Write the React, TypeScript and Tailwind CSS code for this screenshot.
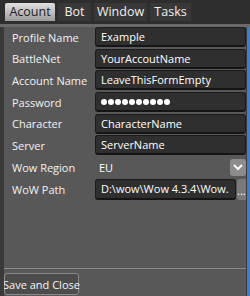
import React from 'react';

const tabs = [
  { name: 'Acount', w: 'w-[50px]' },
  { name: 'Bot', w: 'w-[33px]' },
  { name: 'Window', w: 'w-[53px]' },
  { name: 'Tasks', w: 'w-[41px]' },
];

const rows: { label: string; value: string }[] = [
  { label: 'Profile Name', value: 'Example' },
  { label: 'BattleNet', value: 'YourAccoutName' },
  { label: 'Account Name', value: 'LeaveThisFormEmpty' },
  { label: 'Password', value: '' },
  { label: 'Character', value: 'CharacterName' },
  { label: 'Server', value: 'ServerName' },
];

const Field = ({ children }: { children: React.ReactNode }) => (
  <div className="h-[20px] min-w-0 flex items-center pl-[5px] bg-[#2f2f2f] border border-[#1b1b1b] border-b-2 border-b-[#151515] rounded-[3px] text-white whitespace-nowrap overflow-hidden">
    {children}
  </div>
);

const PasswordDots = () => (
  <div className="flex gap-[1px] items-center">
    {Array.from({ length: 10 }).map((_, i) => (
      <span key={i} className="w-[6px] h-[6px] rounded-full bg-white" />
    ))}
  </div>
);

export default function App() {
  return (
    <div className="w-[250px] h-[296px] bg-[#2e2e2e] flex flex-col overflow-hidden font-['Open_Sans','Noto_Sans',sans-serif] text-[11px] leading-none">
      {/* tab strip */}
      <div className="h-[24px] flex items-start gap-[3px] pl-[5px] pt-[3px]">
        {tabs.map((t, i) => (
          <div
            key={t.name}
            className={
              i === 0
                ? `${t.w} h-[18px] flex items-center justify-center rounded-t-[2px] bg-gradient-to-b from-[#e2e2e2] to-[#9c9c9c] text-[#1e1e1e] text-[12.5px]`
                : `${t.w} h-[18px] flex items-center justify-center bg-[#383838] text-[#f0f0f0] text-[12.5px]`
            }
          >
            {t.name}
          </div>
        ))}
      </div>
      <div className="h-[3px] bg-[#6a6a6a]" />

      <div className="flex flex-1 min-h-0">
        <div className="w-[4px] bg-[#3a3a3a]" />
        <div className="flex-1 min-w-0 bg-[#585858] flex flex-col overflow-hidden">
          <div className="grid grid-cols-[91px_minmax(0,1fr)] gap-y-[1.7px] items-center">
            {rows.map((r) => (
              <React.Fragment key={r.label}>
                <div className="pl-[8px] text-[#f2f2f2] whitespace-nowrap">{r.label}</div>
                <Field>{r.label === 'Password' ? <PasswordDots /> : r.value}</Field>
              </React.Fragment>
            ))}

            {/* Wow Region combo */}
            <div className="pl-[8px] text-[#f2f2f2]">Wow Region</div>
            <div className="h-[20px] min-w-0 flex items-center justify-between pl-[4px] text-white">
              <span>EU</span>
              <span className="w-[16px] h-[17px] rounded-[3px] bg-[#8c8c8c] flex items-center justify-center">
                <svg width="10" height="7" viewBox="0 0 10 7" fill="none">
                  <path d="M1 1l4 4 4-4" stroke="#fff" strokeWidth="2" />
                </svg>
              </span>
            </div>

            {/* WoW Path */}
            <div className="pl-[8px] text-[#f2f2f2]">WoW Path</div>
            <div className="flex gap-[1px] h-[21px] min-w-0">
              <div className="flex-1 min-w-0 flex items-center pl-[5px] bg-[#2f2f2f] border border-[#1b1b1b] border-b-2 border-b-[#151515] rounded-[3px] text-white whitespace-nowrap overflow-hidden">
                D:\wow\Wow 4.3.4\Wow.
              </div>
              <div className="w-[9px] shrink-0 bg-[#7a7a7a] rounded-l-[3px] text-white flex items-end pb-[4px] overflow-hidden text-[11px]">
                ...
              </div>
            </div>
          </div>

          <div className="flex-1" />
          <div className="h-px bg-[#8a8a8a]" />
          <div className="pt-[4px] pb-[1px]">
            <button className="h-[22px] w-[75px] px-0 bg-[#4c4c4c] border border-[#8a8a8a] rounded-[3px] text-[#f4f4f4] text-[11px] whitespace-nowrap flex items-center justify-center">
              Save and Close
            </button>
          </div>
        </div>
        <div className="w-[1px] bg-[#3a3a3a]" />
        <div className="w-[3px] bg-[#3d7ec4]" />
      </div>
    </div>
  );
}
